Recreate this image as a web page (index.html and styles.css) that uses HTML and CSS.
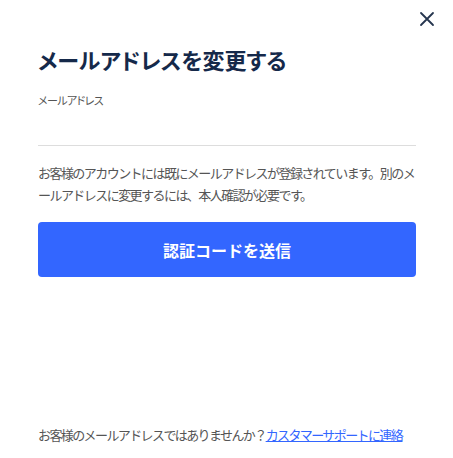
FILE: index.html
```html
<!DOCTYPE html>
<html lang="ja">
<head>
<meta charset="utf-8">
<link rel="stylesheet" href="styles.css">
</head>
<body>
<div class="modal">
  <button class="close" aria-label="閉じる">
    <svg width="16" height="16" viewBox="0 0 16 16"><path d="M2 2L14 14M14 2L2 14" stroke="#26364f" stroke-width="1.8" stroke-linecap="round" fill="none"/></svg>
  </button>
  <h1 class="title">メールアドレスを変更する</h1>
  <div class="label">メールアドレス</div>
  <div class="field"></div>
  <p class="desc">お客様のアカウントには既にメールアドレスが登録されています。別のメールアドレスに変更するには、本人確認が必要です。</p>
  <button class="primary">認証コードを送信</button>
  <p class="foot">お客様のメールアドレスではありませんか？<a href="#">カスタマーサポートに連絡</a></p>
</div>
</body>
</html>
```
FILE: styles.css
```css
html, body { margin: 0; padding: 0; background: #fff; }
body { font-family: "Noto Sans CJK JP", "Noto Sans", sans-serif; }
.modal {
  position: relative;
  box-sizing: border-box;
  height: 458px;
  padding: 44px 37px 13px 38px;
  display: flex;
  flex-direction: column;
}
.close {
  position: absolute;
  top: 11px;
  right: 18px;
  width: 16px;
  height: 16px;
  padding: 0;
  border: 0;
  background: none;
  display: flex;
}
.title {
  margin: 0;
  font-size: 22px;
  line-height: 30px;
  font-weight: 700;
  color: #15294a;
  font-feature-settings: "palt";
}
.label {
  margin-top: 18px;
  font-size: 11px;
  line-height: 16px;
  color: #555;
  letter-spacing: -0.6px;
  font-feature-settings: "palt";
}
.field {
  height: 37px;
  border-bottom: 1px solid #dddddd;
}
.desc {
  margin: 16px 0 0;
  font-size: 13px;
  line-height: 22px;
  color: #555;
  letter-spacing: -1.55px;
}
.primary {
  margin-top: 16px;
  height: 55px;
  border: 0;
  border-radius: 4px;
  background: #3366ff;
  color: #fff;
  font-family: inherit;
  font-size: 16px;
  font-weight: 700;
}
.foot {
  margin: auto 0 0;
  font-size: 13px;
  line-height: 20px;
  color: #555;
  letter-spacing: -1.6px;
}
.foot a { color: #3366ff; text-decoration: underline; }
```
